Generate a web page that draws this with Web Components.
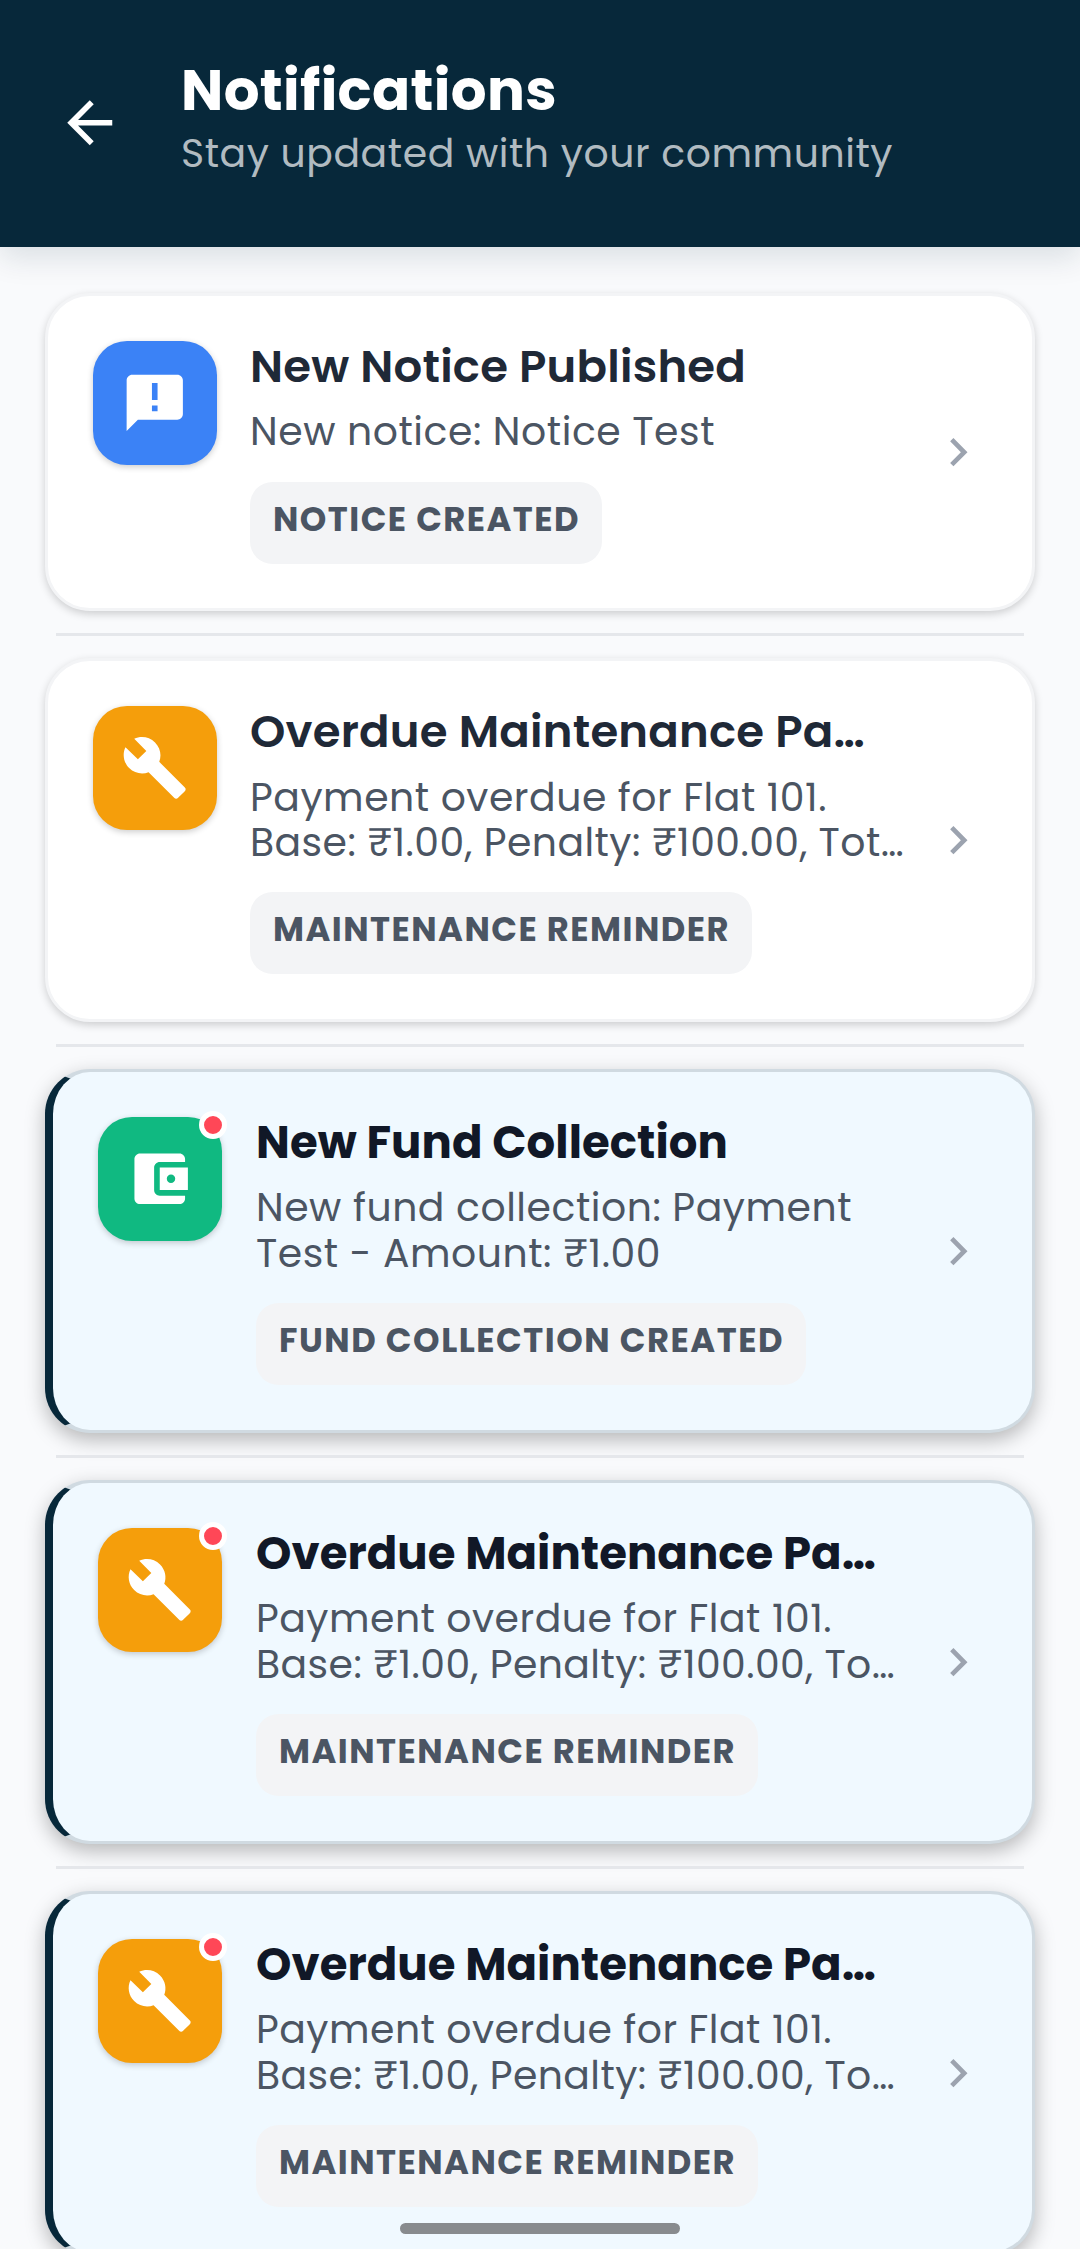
<!DOCTYPE html>
<html lang="en">
<head>
<meta charset="utf-8">
<title>Notifications</title>
<style>
  html, body {
    margin: 0;
    padding: 0;
  }
  body {
    height: 2249px;
    overflow: hidden;
    background: #f9fafc;
    font-family: Poppins, Inter, sans-serif;
    --color-navy: #07283a;
    --color-line: #e5e7eb;
  }
</style>
</head>
<body>

<notifications-page>
  <page-header slot="header">
    <fit-text slot="title" width="376">Notifications</fit-text>
    <fit-text slot="subtitle" width="712">Stay updated with your community</fit-text>
  </page-header>

  <notification-card type="notice">
    <fit-text slot="title" width="496">New Notice Published</fit-text>
    <fit-text slot="message" width="465">New notice: Notice Test</fit-text>
    <fit-text slot="tag" width="307">NOTICE CREATED</fit-text>
  </notification-card>

  <notification-card type="maintenance">
    <fit-text slot="title" width="615">Overdue Maintenance Pa…</fit-text>
    <fit-text slot="message" width="577">Payment overdue for Flat 101.</fit-text>
    <fit-text slot="message" width="654">Base: ₹1.00, Penalty: ₹100.00, Tot…</fit-text>
    <fit-text slot="tag" width="457">MAINTENANCE REMINDER</fit-text>
  </notification-card>

  <notification-card type="fund" unread>
    <fit-text slot="title" width="472">New Fund Collection</fit-text>
    <fit-text slot="message" width="596">New fund collection: Payment</fit-text>
    <fit-text slot="message" width="405">Test - Amount: ₹1.00</fit-text>
    <fit-text slot="tag" width="505">FUND COLLECTION CREATED</fit-text>
  </notification-card>

  <notification-card type="maintenance" unread>
    <fit-text slot="title" width="620">Overdue Maintenance Pa…</fit-text>
    <fit-text slot="message" width="576">Payment overdue for Flat 101.</fit-text>
    <fit-text slot="message" width="639">Base: ₹1.00, Penalty: ₹100.00, To…</fit-text>
    <fit-text slot="tag" width="457">MAINTENANCE REMINDER</fit-text>
  </notification-card>

  <notification-card type="maintenance" unread>
    <fit-text slot="title" width="620">Overdue Maintenance Pa…</fit-text>
    <fit-text slot="message" width="576">Payment overdue for Flat 101.</fit-text>
    <fit-text slot="message" width="639">Base: ₹1.00, Penalty: ₹100.00, To…</fit-text>
    <fit-text slot="tag" width="457">MAINTENANCE REMINDER</fit-text>
  </notification-card>
</notifications-page>

<script>
const iconPaths = {
  back: 'M20 11H7.83l5.59-5.59L12 4l-8 8 8 8 1.41-1.41L7.83 13H20v-2z',
  chevron: 'M10 6L8.59 7.41 13.17 12l-4.58 4.59L10 18l6-6z',
  notice: 'M20 2H4c-1.1 0-1.99.9-1.99 2L2 22l4-4h14c1.1 0 2-.9 2-2V4c0-1.1-.9-2-2-2zm-7 9h-2V5h2v6zm0 4h-2v-2h2v2z',
  maintenance: 'M22.7 19l-9.1-9.1c.9-2.3.4-5-1.5-6.9-2-2-5-2.4-7.4-1.3L9 6 6 9 1.6 4.7C.4 7.1.9 10.1 2.9 12.1c1.9 1.9 4.6 2.4 6.9 1.5l9.1 9.1c.4.4 1 .4 1.4 0l2.3-2.3c.5-.4.5-1.1.1-1.4z',
  fund: 'M21 18v1c0 1.1-.9 2-2 2H5c-1.11 0-2-.9-2-2V5c0-1.1.89-2 2-2h14c1.1 0 2 .9 2 2v1h-9c-1.11 0-2 .9-2 2v8c0 1.1.89 2 2 2h9zm-9-2h10V8H12v8zm4-2.5c-.83 0-1.5-.67-1.5-1.5s.67-1.5 1.5-1.5 1.5.67 1.5 1.5-.67 1.5-1.5 1.5z'
};

const pageCss = `
  :host {
    display: block;
    height: 2249px;
    overflow: hidden;
  }
  .list {
    display: flex;
    flex-direction: column;
    padding: 45.6px 45px 0;
  }
  .home-bar {
    position: fixed;
    left: 400px;
    bottom: 15px;
    width: 280px;
    height: 11px;
    border-radius: 6px;
    background: #888b8e;
  }
`;

const headerCss = `
  :host {
    display: flex;
    align-items: flex-start;
    gap: 57.5px;
    box-sizing: border-box;
    height: 247px;
    padding: 61.3px 56px 0;
    background: var(--color-navy);
    box-shadow: 0 11px 28px rgba(7, 40, 58, 0.12);
    color: #fff;
  }
  md-icon {
    margin-top: 28px;
    --icon-size: 67.5px;
  }
  .text {
    display: flex;
    flex-direction: column;
    gap: 9.4px;
  }
  .title {
    font-size: 56.25px;
    font-weight: 700;
    line-height: 60px;
  }
  .subtitle {
    font-size: 39.375px;
    line-height: 45px;
    color: rgba(255, 255, 255, 0.7);
  }
`;

const cardCss = `
  :host {
    display: block;
  }
  :host(:not(:last-of-type))::after {
    content: "";
    display: block;
    height: 3px;
    margin: 22.05px 11px;
    background: var(--color-line);
  }
  .card {
    display: flex;
    align-items: flex-start;
    padding: 45px 45px 44.4px;
    border: 3px solid #f3f4f6;
    border-radius: 45px;
    background: #fff;
    box-shadow: 0 3px 8px rgba(0, 0, 0, 0.18);
  }
  .icon {
    position: relative;
    display: flex;
    align-items: center;
    justify-content: center;
    flex: none;
    width: 124px;
    height: 124px;
    margin-right: 33px;
    border-radius: 34px;
    color: #fff;
    background: #f59e0b;
    box-shadow: 0 2px 6px rgba(0, 0, 0, 0.2);
    --icon-size: 67.5px;
  }
  :host([type="notice"]) .icon {
    background: #3b82f6;
  }
  :host([type="fund"]) .icon {
    background: #10b981;
  }
  .dot {
    display: none;
    position: absolute;
    top: -6px;
    right: -5px;
    box-sizing: border-box;
    width: 28px;
    height: 28px;
    border: 5.6px solid #fff;
    border-radius: 50%;
    background: #ff4757;
  }
  .body {
    flex: 1;
    min-width: 0;
  }
  .title {
    font-size: 45px;
    font-weight: 600;
    line-height: 51px;
    color: #1f2937;
  }
  .message {
    margin-top: 17.5px;
    font-size: 39.375px;
    line-height: 45.4px;
    color: #4b5563;
  }
  .tag {
    width: fit-content;
    margin-top: 27.1px;
    padding: 0 22px 6px 23px;
    border-radius: 22.5px;
    background: #f3f4f6;
    font-size: 33.75px;
    font-weight: 700;
    line-height: 76px;
    color: #4b5563;
  }
  .chevron {
    align-self: center;
    flex: none;
    margin-right: 1px;
    color: #9ca3af;
    --icon-size: 56.25px;
  }

  /* unread */
  :host([unread]) .card {
    border-color: #d0dae1;
    border-left: 8px solid var(--color-navy);
    background: #f0f9ff;
    box-shadow: 0 7px 20px rgba(0, 0, 0, 0.27);
  }
  :host([unread]) .icon {
    margin-right: 34px;
  }
  :host([unread]) .dot {
    display: block;
  }
  :host([unread]) .title {
    font-weight: 700;
    color: #111827;
  }
`;


/* MdIcon */
class MdIcon extends HTMLElement {
  constructor() {
    super();
    this.attachShadow({ mode: 'open' });
  }

  connectedCallback() {
    this.shadowRoot.innerHTML = `
      <style>
        :host { display: block; flex: none; width: var(--icon-size); height: var(--icon-size); }
        svg { display: block; width: 100%; height: 100%; fill: currentColor; }
      </style>
      <svg viewBox="0 0 24 24"><path d="${iconPaths[this.getAttribute('name')]}"/></svg>
    `;
  }
}

/* FitText: one line of text, tracked so that it fills its width attribute */
class FitText extends HTMLElement {
  constructor() {
    super();
    this.attachShadow({ mode: 'open' });
    this.shadowRoot.innerHTML = `
      <style>
        :host { display: block; white-space: nowrap; }
        span { display: inline-block; }
      </style>
      <span><slot></slot></span>
    `;
  }

  fit() {
    const span = this.shadowRoot.querySelector('span');
    const width = Number(this.getAttribute('width'));
    span.style.letterSpacing = '0px';
    const natural = span.getBoundingClientRect().width;
    span.style.letterSpacing = `${(width - natural) / [...this.textContent].length}px`;
  }
}

/* PageHeader */
class PageHeader extends HTMLElement {
  constructor() {
    super();
    this.attachShadow({ mode: 'open' });
    this.shadowRoot.innerHTML = `
      <style>${headerCss}</style>
      <md-icon name="back"></md-icon>
      <div class="text">
        <div class="title"><slot name="title"></slot></div>
        <div class="subtitle"><slot name="subtitle"></slot></div>
      </div>
    `;
  }
}

/* NotificationCard */
class NotificationCard extends HTMLElement {
  constructor() {
    super();
    this.attachShadow({ mode: 'open' });
    this.shadowRoot.innerHTML = `
      <style>${cardCss}</style>
      <div class="card">
        <div class="icon">
          <md-icon name="${this.getAttribute('type')}"></md-icon>
          <span class="dot"></span>
        </div>
        <div class="body">
          <div class="title"><slot name="title"></slot></div>
          <div class="message"><slot name="message"></slot></div>
          <div class="tag"><slot name="tag"></slot></div>
        </div>
        <md-icon class="chevron" name="chevron"></md-icon>
      </div>
    `;
  }
}

/* NotificationsPage */
class NotificationsPage extends HTMLElement {
  constructor() {
    super();
    this.attachShadow({ mode: 'open' });
    this.shadowRoot.innerHTML = `
      <style>${pageCss}</style>
      <slot name="header"></slot>
      <div class="list"><slot></slot></div>
      <div class="home-bar"></div>
    `;
  }
}

customElements.define('md-icon', MdIcon);
customElements.define('fit-text', FitText);
customElements.define('page-header', PageHeader);
customElements.define('notification-card', NotificationCard);
customElements.define('notifications-page', NotificationsPage);

// every shadow root is in place now, so the inherited font sizes are final
document.querySelectorAll('fit-text').forEach((el) => el.fit());
</script>
</body>
</html>
